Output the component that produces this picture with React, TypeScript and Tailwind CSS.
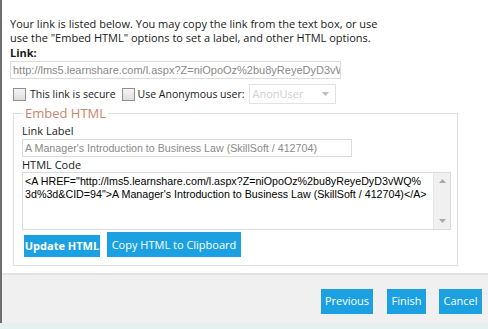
import React from "react";

export default function App() {
  const seg = { fontFamily: '"Open Sans", "Noto Sans", sans-serif' };
  const arial = { fontFamily: '"Liberation Sans", Arial, sans-serif' };
  return (
    <div className="relative w-[488px] h-[329px] bg-[#e4f1f0] overflow-hidden" style={seg}>
      <div className="flex flex-col h-[323px] border-l-2 border-[#6e6e6e] bg-white">
        <div className="flex-1 pl-[8px] pt-[17px] text-[11px] leading-[14px] text-[#1a1a1a]">
          <p className="w-[370px]">
            Your link is listed below. You may copy the link from the text box, or use use the "Embed HTML" options to set a label, and other HTML options.
          </p>
          <div className="font-bold mt-[1px]">Link:</div>
          <div className="mt-[1px] w-[331px] h-[18px] border border-[#dcdcdc] bg-white overflow-hidden whitespace-nowrap px-[2px] text-[11px] leading-[16px] text-[#8a8a8a]" style={arial}>
            http://lms5.learnshare.com/l.aspx?Z=niOpoOz%2bu8yReyeDyD3vWQ%3d%3d&amp;CID=94
          </div>
          <div className="flex items-center mt-[5px] h-[20px] text-[10.5px]">
            <span className="ml-[3px] w-[13px] h-[13px] border border-[#8f8f8f] bg-gradient-to-b from-[#f4f4f4] to-[#dedede]" />
            <span className="ml-[4px]">This link is secure</span>
            <span className="ml-[6px] w-[13px] h-[13px] border border-[#8f8f8f] bg-gradient-to-b from-[#f4f4f4] to-[#dedede]" />
            <span className="ml-[3px]">Use Anonymous user:</span>
            <span className="ml-[4px] w-[87px] h-[20px] border border-[#e2e2e2] flex items-center justify-between pl-[3px] pr-[6px] text-[11px] text-[#cfcfcf]">
              AnonUser
              <svg width="7" height="4" viewBox="0 0 7 4"><path d="M0 0h7L3.5 4z" fill="#bcbcbc" /></svg>
            </span>
          </div>
          <fieldset className="mt-[2px] ml-[3px] w-[445px] border border-[#dedede] pl-[8px] pr-[5px] pb-[8px] pt-0">
            <legend className="ml-[1px] px-[2px] text-[13px] leading-[14px] text-[#c8866c]">Embed HTML</legend>
            <div className="mt-[4px] text-[11px] leading-[14px]">Link Label</div>
            <div className="mt-[1px] w-[330px] h-[18px] border border-[#dcdcdc] px-[2px] text-[10.7px] leading-[16px] text-[#8a8a8a] whitespace-nowrap overflow-hidden" style={arial}>
              A Manager's Introduction to Business Law (SkillSoft / 412704)
            </div>
            <div className="text-[11px] leading-[15px]">HTML Code</div>
            <div className="flex w-[429px] h-[58px] border border-[#dcdcdc]">
              <div className="flex-1 px-[2px] pt-[2px] text-[10.7px] leading-[13px] text-black whitespace-nowrap overflow-hidden" style={arial}>
                &lt;A HREF="http://lms5.learnshare.com/l.aspx?Z=niOpoOz%2bu8yReyeDyD3vWQ%
                <br />
                3d%3d&amp;CID=94"&gt;A Manager's Introduction to Business Law (SkillSoft / 412704)&lt;/A&gt;
              </div>
              <div className="w-[17px] bg-[#f0f0f0] border-l border-[#e6e6e6] flex flex-col justify-between items-center py-[6px]">
                <svg width="7" height="4" viewBox="0 0 7 4"><path d="M3.5 0L7 4H0z" fill="#a8a8a8" /></svg>
                <svg width="7" height="4" viewBox="0 0 7 4"><path d="M0 0h7L3.5 4z" fill="#a8a8a8" /></svg>
              </div>
            </div>
            <div className="flex items-end mt-[2px] gap-[7px] ml-[2px]">
              <button className="h-[22px] w-[76px] bg-[#1ba1e2] text-white text-[11px] font-bold">Update HTML</button>
              <button className="h-[25px] w-[134px] bg-[#1ba1e2] text-white text-[11px]">Copy HTML to Clipboard</button>
            </div>
          </fieldset>
        </div>
        <div className="h-[50px] bg-[#f0f0f0] border-t-2 border-[#e3e3e3] flex items-center justify-end pr-[6px] gap-[14px] pt-[4px]">
          <button className="h-[25px] w-[52px] bg-[#1ba1e2] text-white text-[11px]">Previous</button>
          <button className="h-[25px] w-[39px] bg-[#1ba1e2] text-white text-[11px]">Finish</button>
          <button className="h-[25px] w-[43px] bg-[#1ba1e2] text-white text-[11px] -ml-[1px]">Cancel</button>
        </div>
      </div>
    </div>
  );
}
